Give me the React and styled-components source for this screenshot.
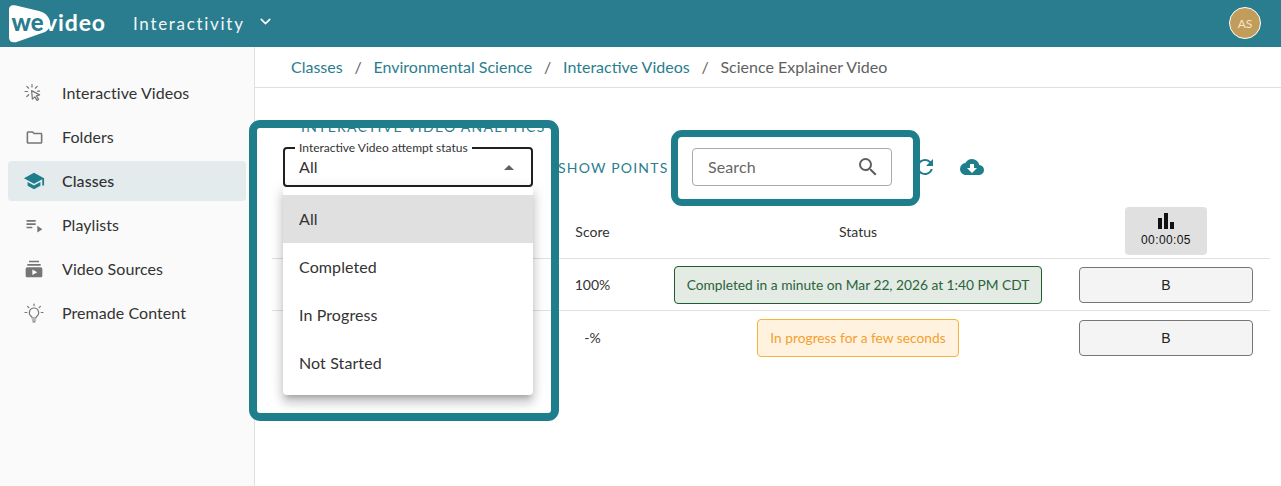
import React from 'react';
import styled, { createGlobalStyle } from 'styled-components';
import { ChevronDown } from 'lucide-react';
import {
  MdBarChart,
  MdCloudDownload,
  MdOutlineFolder,
  MdPlaylistPlay,
  MdRefresh,
  MdSchool,
  MdSearch,
  MdSubscriptions,
} from 'react-icons/md';

const teal = '#2a7d8e';
const callout = '#1f7e8c';

const GlobalStyle = createGlobalStyle`
  html, body { margin: 0; padding: 0; background: #fff; }
  body { font-family: 'Lato', 'Liberation Sans', sans-serif; color: #333; overflow: hidden; }
`;

const Page = styled.div`
  position: relative;
  width: 1281px;
  height: 486px;
  overflow: hidden;
  display: flex;
  flex-direction: column;
`;

const Header = styled.header`
  height: 47px;
  flex: none;
  background: ${teal};
  display: flex;
  align-items: center;
  padding: 0 20px 0 9px;
`;

const LogoWrap = styled.div`
  width: 97px;
  height: 42px;
  margin-right: 27px;
  flex: none;
`;

const AppName = styled.div`
  color: #f1f6f7;
  font-size: 17px;
  letter-spacing: 1.7px;
`;

const Chevron = styled.div`
  display: flex;
  color: #fff;
  margin: -4px 0 0 12px;
`;

const Avatar = styled.div`
  width: 30px;
  height: 30px;
  margin-left: auto;
  margin-top: -1px;
  border: 1px solid #fff;
  border-radius: 50%;
  background: #c19c5b;
  color: #f5e6c8;
  font-size: 12px;
  display: flex;
  align-items: center;
  justify-content: center;
`;

const Body = styled.div`
  flex: 1;
  display: flex;
  min-height: 0;
`;

const Sidebar = styled.nav`
  width: 238px;
  flex: none;
  background: #fafafa;
  border-right: 1px solid #e0e0e0;
  padding: 26px 8px 0;
  display: flex;
  flex-direction: column;
  gap: 4px;
`;

const NavItem = styled.div`
  height: 40px;
  display: flex;
  align-items: center;
  border-radius: 4px;
  background: ${(p) => (p.$active ? '#e3ebed' : 'transparent')};
  font-size: 16px;
  letter-spacing: 0.06px;
  color: #333;
  font-weight: ${(p) => (p.$active ? 500 : 400)};
`;

const NavLabel = styled.span`
  margin-top: -2px;
`;

const NavIcon = styled.span`
  width: 54px;
  flex: none;
  display: flex;
  justify-content: center;
  padding-right: 2px;
  box-sizing: border-box;
  color: ${(p) => (p.$active ? callout : '#757575')};
`;

const Main = styled.main`
  flex: 1;
  min-width: 0;
  display: flex;
  flex-direction: column;
`;

const Breadcrumbs = styled.div`
  height: 38px;
  padding-bottom: 2px;
  flex: none;
  border-bottom: 1px solid #e0e0e0;
  display: flex;
  align-items: center;
  padding-left: 36px;
  font-size: 16px;
  color: #616161;
`;

const Crumb = styled.span`
  color: ${teal};
`;

const Sep = styled.span`
  margin: 0 11.8px;
`;

const Content = styled.div`
  padding: 29px 11px 0 17px;
`;

const Title = styled.div`
  height: 20px;
  line-height: 20px;
  margin-left: 29px;
  font-size: 14px;
  letter-spacing: 1.25px;
  color: ${teal};
  text-transform: uppercase;
  white-space: nowrap;
`;

const Toolbar = styled.div`
  margin: 10px 0 0 11px;
  height: 40px;
  display: flex;
  align-items: center;
`;

const SelectBox = styled.div`
  position: relative;
  width: 250px;
  height: 40px;
  box-sizing: border-box;
  border: 2px solid #212121;
  border-radius: 4px;
  display: flex;
  align-items: center;
  padding: 0 0 2px 14px;
  font-size: 16px;
  letter-spacing: 0.1px;
  flex: none;
`;

const FloatLabel = styled.span`
  position: absolute;
  left: 10px;
  top: -9px;
  padding: 0 4px;
  background: #fff;
  font-size: 12px;
  line-height: 15px;
  letter-spacing: 0;
  white-space: nowrap;
  color: #333;
`;

const Caret = styled.span`
  position: absolute;
  right: 17px;
  top: 16px;
  width: 0;
  height: 0;
  border-left: 5px solid transparent;
  border-right: 5px solid transparent;
  border-bottom: 5px solid #616161;
`;

const Menu = styled.ul`
  position: absolute;
  z-index: 5;
  left: -2px;
  top: 38px;
  width: 250px;
  margin: 0;
  padding: 8px 0;
  list-style: none;
  background: #fff;
  border-radius: 0 0 4px 4px;
  box-shadow: 0 5px 5px -3px rgba(0, 0, 0, 0.2), 0 8px 10px 1px rgba(0, 0, 0, 0.14),
    0 3px 14px 2px rgba(0, 0, 0, 0.1);
`;

const MenuItem = styled.li`
  height: 48px;
  line-height: 48px;
  padding-left: 16px;
  font-size: 16px;
  color: #333;
  background: ${(p) => (p.$selected ? '#e0e0e0' : 'transparent')};
`;

const ShowPoints = styled.div`
  margin-left: 25px;
  font-size: 14px;
  letter-spacing: 1.2px;
  color: ${teal};
  white-space: nowrap;
  width: 110px;
  flex: none;
`;

const SearchBox = styled.div`
  margin-left: 24px;
  width: 200px;
  height: 38px;
  box-sizing: border-box;
  border: 1px solid #aaa;
  border-radius: 4px;
  display: flex;
  align-items: center;
  justify-content: space-between;
  padding: 0 2px 2px 15px;
  font-size: 16px;
  letter-spacing: 0.1px;
  color: #666;
  flex: none;
`;

const SearchIcon = styled.span`
  display: flex;
  width: 24px;
  margin: 2px 9px 0 0;
  color: #5f5f5f;
`;

const ToolIcon = styled.span`
  display: flex;
  color: ${callout};
  margin-left: ${(p) => p.$gap}px;
`;

const Table = styled.div`
  margin-top: 17px;
`;

const Row = styled.div`
  display: grid;
  grid-template-columns: 273px 95px 436px 180px;
  padding-right: 14px;
  align-items: center;
  justify-items: center;
  height: ${(p) => p.$h}px;
  box-sizing: border-box;
  border-bottom: ${(p) => (p.$plain ? 'none' : '1px solid #e0e0e0')};
  font-size: 14px;
  color: #333;
`;

const TimeButton = styled.div`
  width: 82px;
  height: 48px;
  margin-top: -1px;
  padding-top: 2px;
  box-sizing: border-box;
  background: #e0e0e0;
  border-radius: 4px;
  display: flex;
  flex-direction: column;
  align-items: center;
  color: #111;
  font-family: 'Liberation Sans', sans-serif;
  font-size: 12px;
  line-height: 14px;
  letter-spacing: 0.4px;
`;

const Badge = styled.div`
  box-sizing: border-box;
  height: 38px;
  display: flex;
  align-items: center;
  padding: 0 12px;
  border-radius: 4px;
  font-size: 13.75px;
  white-space: nowrap;
  border: 1px solid ${(p) => (p.$warn ? '#f7b23b' : '#1e5e2e')};
  background: ${(p) => (p.$warn ? '#fff3e0' : '#e3ebe4')};
  color: ${(p) => (p.$warn ? '#f59f2e' : '#2a6339')};
`;

const AnswerButton = styled.div`
  box-sizing: border-box;
  width: 174px;
  height: 36px;
  border: 1px solid #767676;
  border-radius: 4px;
  background: #f4f4f4;
  color: #222;
  font-family: 'Liberation Sans', sans-serif;
  font-size: 14px;
  display: flex;
  align-items: center;
  justify-content: center;
`;

const Callout = styled.div`
  position: absolute;
  z-index: 10;
  pointer-events: none;
  box-sizing: border-box;
  left: ${(p) => p.$x}px;
  top: ${(p) => p.$y}px;
  width: ${(p) => p.$w}px;
  height: ${(p) => p.$h}px;
  border: ${(p) => p.$b}px solid ${callout};
  border-radius: 11px;
`;

const CursorIcon = () => (
  <svg width="20" height="20" viewBox="0 0 20 20" fill="none" stroke="#757575" strokeWidth="1.2" strokeLinecap="round">
    <path d="M8 1.500v2.600M2.800 3.400l1.900 1.800M13.200 3.400l-1.900 1.800M1 8.500h2.600M2.800 13.500l1.900-1.800M13.600 8.200h2" />
    <path d="M7.600 7.600l8 4.300-3.200 1 2.200 3.500-1.600 1-2.200-3.500-2.400 2.200z" strokeLinejoin="round" />
  </svg>
);

const BulbIcon = () => (
  <svg width="20" height="20" viewBox="0 0 20 20" fill="none" stroke="#757575" strokeWidth="1.2" strokeLinecap="round">
    <path d="M10 1v1.600M3.600 3.400l1.200 1.200M16.400 3.400l-1.200 1.200M1 9.500h1.800M17.200 9.500H19" />
    <path d="M10 5a4.600 4.600 0 0 0-2.600 8.400c.5.400.7.900.7 1.600h3.800c0-.7.2-1.200.7-1.600A4.600 4.600 0 0 0 10 5z" />
    <path d="M8.400 17h3.200M9 18.800h2" />
  </svg>
);

const Logo = () => (
  <svg width="97" height="42" viewBox="0 0 97 42">
    <path d="M0 7C0 2.500 3 1.500 7 2.500L30 8C42 11 45 24 36 29L9 38.500C4 40.500 0 39 0 34.500z" fill="#fff" />
    <text x="2.500" y="28" textLength="32" lengthAdjust="spacingAndGlyphs" fontFamily="Lato, sans-serif" fontWeight="900" fontSize="24" fill={teal}>we</text>
    <text x="36" y="28" textLength="60" lengthAdjust="spacing" fontFamily="Lato, sans-serif" fontWeight="700" fontSize="23" fill="#fff">video</text>
  </svg>
);

const navItems = [
  { label: 'Interactive Videos', icon: <CursorIcon /> },
  { label: 'Folders', icon: <MdOutlineFolder size={19} /> },
  { label: 'Classes', icon: <MdSchool size={22} />, active: true },
  { label: 'Playlists', icon: <MdPlaylistPlay size={20} /> },
  { label: 'Video Sources', icon: <MdSubscriptions size={20} /> },
  { label: 'Premade Content', icon: <BulbIcon /> },
];

const statuses = ['All', 'Completed', 'In Progress', 'Not Started'];

export default function App() {
  return (
    <Page>
      <GlobalStyle />
      <Header>
        <LogoWrap>
          <Logo />
        </LogoWrap>
        <AppName>Interactivity</AppName>
        <Chevron>
          <ChevronDown size={17} strokeWidth={2.2} />
        </Chevron>
        <Avatar>AS</Avatar>
      </Header>
      <Body>
        <Sidebar>
          {navItems.map((item) => (
            <NavItem key={item.label} $active={item.active}>
              <NavIcon $active={item.active}>{item.icon}</NavIcon>
              <NavLabel>{item.label}</NavLabel>
            </NavItem>
          ))}
        </Sidebar>
        <Main>
          <Breadcrumbs>
            <Crumb>Classes</Crumb>
            <Sep>/</Sep>
            <Crumb>Environmental Science</Crumb>
            <Sep>/</Sep>
            <Crumb>Interactive Videos</Crumb>
            <Sep>/</Sep>
            Science Explainer Video
          </Breadcrumbs>
          <Content>
            <Title>Interactive Video Analytics</Title>
            <Toolbar>
              <SelectBox>
                <FloatLabel>Interactive Video attempt status</FloatLabel>
                All
                <Caret />
                <Menu>
                  {statuses.map((s, i) => (
                    <MenuItem key={s} $selected={i === 0}>
                      {s}
                    </MenuItem>
                  ))}
                </Menu>
              </SelectBox>
              <ShowPoints>SHOW POINTS</ShowPoints>
              <SearchBox>
                Search
                <SearchIcon>
                  <MdSearch size={24} />
                </SearchIcon>
              </SearchBox>
              <ToolIcon $gap={21}>
                <MdRefresh size={24} />
              </ToolIcon>
              <ToolIcon $gap={23}>
                <MdCloudDownload size={24} />
              </ToolIcon>
            </Toolbar>
            <Table>
              <Row $h={55}>
                <span />
                <span>Score</span>
                <span>Status</span>
                <TimeButton>
                  <MdBarChart size={24} />
                  00:00:05
                </TimeButton>
              </Row>
              <Row $h={52}>
                <span />
                <span>100%</span>
                <Badge>Completed in a minute on Mar 22, 2026 at 1:40 PM CDT</Badge>
                <AnswerButton>B</AnswerButton>
              </Row>
              <Row $h={53} $plain>
                <span />
                <span>-%</span>
                <Badge $warn>In progress for a few seconds</Badge>
                <AnswerButton>B</AnswerButton>
              </Row>
            </Table>
          </Content>
        </Main>
      </Body>
      <Callout $x={249} $y={120} $w={310} $h={301} $b={8} />
      <Callout $x={671} $y={130} $w={249} $h={76} $b={7} />
    </Page>
  );
}
